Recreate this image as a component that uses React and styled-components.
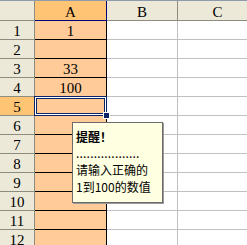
import React from "react";
import styled, { createGlobalStyle, css } from "styled-components";

const GlobalStyle = createGlobalStyle`
  html, body {
    margin: 0;
    padding: 0;
    background: #ffffff;
    overflow: hidden;
  }
`;

const Sheet = styled.div`
  position: relative;
  width: 247px;
  height: 245px;
  overflow: hidden;
  border-top: 1px solid #8f9aad;
  box-sizing: border-box;
  font-family: "Liberation Serif", serif;
  font-size: 15px;
  color: #000;
`;

const Grid = styled.div`
  display: grid;
  grid-template-columns: 35px 72px 71px 80px;
  grid-auto-rows: 19px;
  grid-template-rows: 20px;
`;

const Head = styled.div`
  box-sizing: border-box;
  background: ${(p) => (p.active ? "#ffc474" : "#ece9d8")};
  border-right: 1px solid ${(p) => (p.active ? "#00007a" : "#8e8c80")};
  border-bottom: 1px solid ${(p) => (p.active ? "#00007a" : "#8e8c80")};
  text-align: center;
  line-height: 15px;
  padding-top: 4px;
`;

const RowHead = styled.div`
  box-sizing: border-box;
  background: ${(p) => (p.active ? "#ffc474" : "#ece9d8")};
  border-right: 1px solid #8e8c80;
  border-bottom: 1px solid #8e8c80;
  text-align: center;
  line-height: 15px;
  padding-top: 3px;
`;

const Cell = styled.div`
  position: relative;
  box-sizing: border-box;
  text-align: center;
  line-height: 15px;
  padding-top: 3px;
  ${(p) =>
    p.filled
      ? css`
          background: #ffcc99;
          border-right: 1px solid #000;
          border-bottom: 1px solid #000;
        `
      : css`
          background: #fff;
          border-right: 1px solid #c0c0c0;
          border-bottom: 1px solid #c0c0c0;
        `}
`;

const Selection = styled.div`
  position: absolute;
  top: -1px;
  left: -1px;
  right: -1px;
  bottom: -1px;
  border: 1px solid #0a246a;
  box-shadow: inset 0 0 0 1px #ffffff, inset 0 0 0 2px #0a246a;
  z-index: 2;
`;

const FillHandle = styled.div`
  position: absolute;
  right: -4px;
  bottom: -4px;
  width: 5px;
  height: 5px;
  background: #0a246a;
  border: 1px solid #ffffff;
  z-index: 3;
`;

const Comment = styled.div`
  position: absolute;
  left: 72px;
  top: 121px;
  width: 91px;
  height: 81px;
  box-sizing: border-box;
  background: #ffffe1;
  border: 1px solid #6b6b6b;
  box-shadow: 1px 1px 0 #9a9a9a;
  padding: 5px 0 0 3px;
  font-family: "Noto Sans CJK SC", "Noto Sans", sans-serif;
  font-size: 12px;
  line-height: 17px;
  color: #000;
  z-index: 5;
`;

const Title = styled.div`
  font-weight: bold;
`;

const Dots = styled.div`
  letter-spacing: 0.2px;
  line-height: 16px;
`;

const columns = ["A", "B", "C"];
const values = { 1: "1", 3: "33", 4: "100" };
const rows = Array.from({ length: 12 }, (_, i) => i + 1);

export default function App() {
  return (
    <>
      <GlobalStyle />
      <Sheet>
        <Grid>
          <Head />
          {columns.map((c) => (
            <Head key={c} active={c === "A"}>
              {c}
            </Head>
          ))}
          {rows.map((r) => (
            <React.Fragment key={r}>
              <RowHead active={r === 5}>{r}</RowHead>
              <Cell filled>
                {values[r] || ""}
                {r === 5 && (
                  <Selection>
                    <FillHandle />
                  </Selection>
                )}
              </Cell>
              <Cell />
              <Cell />
            </React.Fragment>
          ))}
        </Grid>
        <Comment>
          <Title>提醒！</Title>
          <Dots>..................</Dots>
          <div>请输入正确的</div>
          <div>1到100的数值</div>
        </Comment>
      </Sheet>
    </>
  );
}
